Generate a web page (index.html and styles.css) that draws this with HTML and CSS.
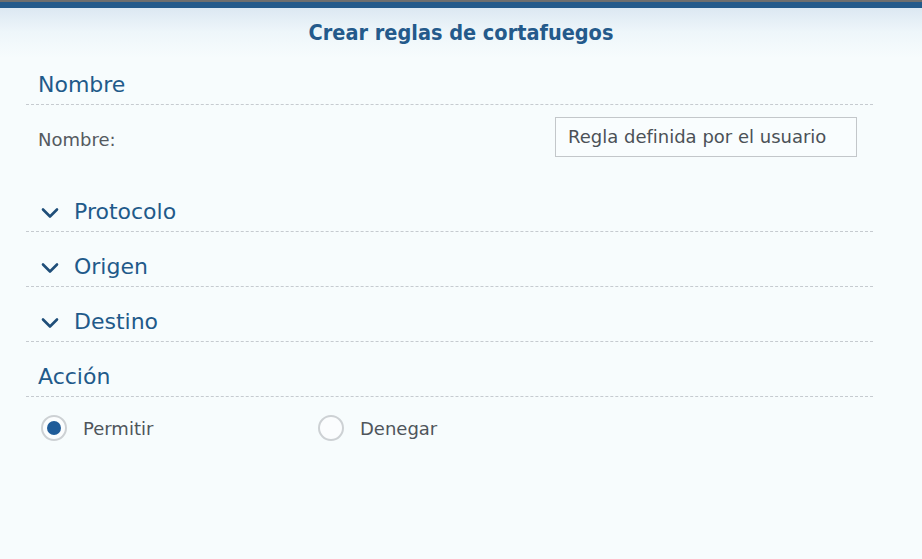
FILE: index.html
```html
<!DOCTYPE html>
<html lang="es">
<head>
<meta charset="utf-8">
<title>Crear reglas de cortafuegos</title>
<link rel="stylesheet" href="styles.css">
</head>
<body>
<div class="page">
  <header class="topbar">
    <h1 class="title">Crear reglas de cortafuegos</h1>
  </header>
  <main class="content">
    <section class="sec">
      <div class="sec-head"><span class="sec-title">Nombre</span></div>
      <div class="field-row">
        <label class="field-label" for="name">Nombre:</label>
        <div class="input">Regla definida por el usuario</div>
      </div>
    </section>
    <section class="sec">
      <div class="sec-head">
        <svg class="chev" width="20" height="12" viewBox="0 0 20 12"><path d="M3 2.5 L10 9.5 L17 2.5" fill="none" stroke="#1f4e79" stroke-width="2.6" stroke-linecap="round" stroke-linejoin="round"/></svg>
        <span class="sec-title">Protocolo</span>
      </div>
    </section>
    <section class="sec">
      <div class="sec-head">
        <svg class="chev" width="20" height="12" viewBox="0 0 20 12"><path d="M3 2.5 L10 9.5 L17 2.5" fill="none" stroke="#1f4e79" stroke-width="2.6" stroke-linecap="round" stroke-linejoin="round"/></svg>
        <span class="sec-title">Origen</span>
      </div>
    </section>
    <section class="sec">
      <div class="sec-head">
        <svg class="chev" width="20" height="12" viewBox="0 0 20 12"><path d="M3 2.5 L10 9.5 L17 2.5" fill="none" stroke="#1f4e79" stroke-width="2.6" stroke-linecap="round" stroke-linejoin="round"/></svg>
        <span class="sec-title">Destino</span>
      </div>
    </section>
    <section class="sec">
      <div class="sec-head"><span class="sec-title">Acción</span></div>
      <div class="radio-row">
        <div class="radio-opt">
          <span class="radio checked"></span>
          <span class="radio-label">Permitir</span>
        </div>
        <div class="radio-opt">
          <span class="radio"></span>
          <span class="radio-label">Denegar</span>
        </div>
      </div>
    </section>
  </main>
</div>
</body>
</html>
```

FILE: styles.css
```css
html, body {
  margin: 0;
  padding: 0;
}
body {
  background: #f7fcfd;
  font-family: "DejaVu Sans", Verdana, sans-serif;
}
.page {
  width: 922px;
  height: 559px;
  border-top: 2px solid #6e6e6e;
  box-sizing: border-box;
  background: linear-gradient(to bottom, #dce8f2 6px, #eef6fa 30px, #f7fcfd 56px, #f7fcfd 100%);
}
.topbar {
  border-top: 6px solid #245a8b;
  height: 48px;
  box-sizing: border-box;
  display: flex;
  justify-content: center;
  padding-top: 12px;
}
.title {
  margin: 0;
  font-family: "DejaVu Sans Condensed", "DejaVu Sans", sans-serif;
  font-weight: bold;
  font-size: 21.5px;
  line-height: 26px;
  color: #245a8b;
}
.content {
  padding: 0 49px 0 26px;
}
.sec-head {
  height: 55px;
  box-sizing: border-box;
  border-bottom: 1px dashed #c6cbd0;
  display: flex;
  align-items: flex-end;
  padding: 0 12px 5px;
}
.sec-title {
  font-size: 22px;
  line-height: 28px;
  color: #1f5a8a;
}
.chev {
  display: block;
  margin: 0 14px 7px 2px;
}
.field-row {
  display: flex;
  align-items: center;
  padding: 12px 16px 20px 12px;
}
.field-label {
  font-size: 18px;
  color: #555a5f;
  margin-top: 4px;
}
.input {
  margin-left: auto;
  width: 302px;
  height: 40px;
  box-sizing: border-box;
  border: 1px solid #c3c7ca;
  background: #f9fdfe;
  padding: 0 12px;
  font-size: 18px;
  line-height: 38px;
  color: #4b5157;
}
.radio-row {
  display: flex;
  padding: 18px 15px 0;
}
.radio-opt {
  display: flex;
  align-items: center;
  width: 277px;
}
.radio {
  width: 26px;
  height: 26px;
  box-sizing: border-box;
  border: 2px solid #cdd1d4;
  border-radius: 50%;
  background: #fbfdfe;
  display: flex;
  align-items: center;
  justify-content: center;
  margin-right: 16px;
}
.radio.checked::after {
  content: "";
  width: 14px;
  height: 14px;
  border-radius: 50%;
  background: #1f5c99;
}
.radio-label {
  font-size: 18px;
  color: #4f555b;
}
```
